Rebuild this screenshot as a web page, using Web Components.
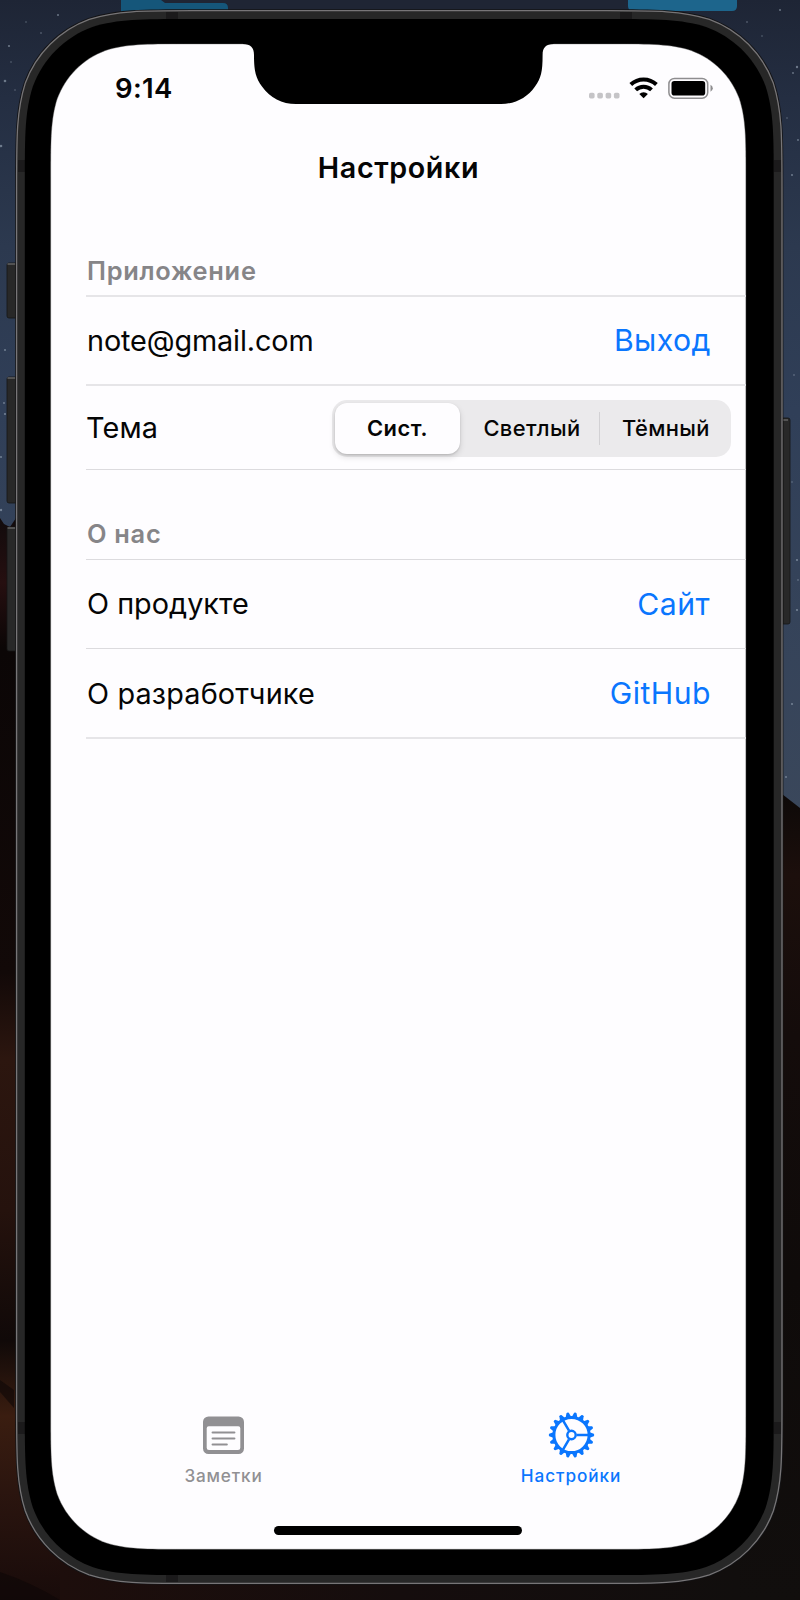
<!DOCTYPE html>
<html lang="ru">
<head>
<meta charset="utf-8">
<title>Настройки</title>
<style>
html,body{margin:0;height:1600px;overflow:hidden;background:#0f0c0d}
body{font-family:Inter,"Liberation Sans",sans-serif;color:#050505}
</style>
</head>
<body>
<desk-wallpaper>
  <phone-frame>
    <status-bar time="9:14"></status-bar>
    <nav-title>Настройки</nav-title>
    <settings-section heading="Приложение" style="--gap:44px;--head:49px;--lh:50.4px;--line:2px;--rule:#e6e5e8">
      <settings-row style="--h:87px;--ls:-.12px">note@gmail.com<link-action slot="action">Выход</link-action></settings-row>
      <settings-row style="--h:83px;--line:1px;--rule:#dcdbde;--tail:15px;--shift:1px;--inset:0px;--ls:.15px">Тема
        <segment-control slot="action">
          <segment-item selected>Сист.</segment-item>
          <segment-item style="--basis:134px;--nudge:2px">Светлый</segment-item>
          <segment-item divided style="--basis:130px;--nudge:6px">Тёмный</segment-item>
        </segment-control>
      </settings-row>
    </settings-section>
    <settings-section heading="О нас" style="--gap:40px;--head:49px;--lh:48.4px;--line:1px;--rule:#dcdbde">
      <settings-row style="--h:88px;--tail:36px">О продукте<link-action slot="action">Сайт</link-action></settings-row>
      <settings-row style="--h:88px;--line:2px;--rule:#e6e5e8;--shift:1px;--ls:.16px">О разработчике<link-action slot="action">GitHub</link-action></settings-row>
    </settings-section>
    <tab-bar>
      <tab-item icon="notes" style="--ls:.8px">Заметки</tab-item>
      <tab-item icon="gear" active style="--ls:.92px">Настройки</tab-item>
    </tab-bar>
    <home-indicator></home-indicator>
  </phone-frame>
</desk-wallpaper>

<script>
const define = (name, render) => customElements.define(name, class extends HTMLElement {
  connectedCallback() {
    if (this.shadowRoot) return;
    this.attachShadow({ mode: 'open' }).innerHTML = render(this);
  }
});

// Continuous-curvature rounded rectangle (iOS corner smoothing).
function squircle(x, y, w, h, r) {
  const a = 1.52866 * r, b = 1.08849 * r, c = .86841 * r, d = .63149 * r, e = .07491 * r, f = .37282 * r, g = .16906 * r;
  const X = x + w, Y = y + h;
  return `M${x} ${y + a}C${x} ${y + b} ${x} ${y + c} ${x + e} ${y + d}C${x + g} ${y + f} ${x + f} ${y + g} ${x + d} ${y + e}C${x + c} ${y} ${x + b} ${y} ${x + a} ${y}` +
    `L${X - a} ${y}C${X - b} ${y} ${X - c} ${y} ${X - d} ${y + e}C${X - f} ${y + g} ${X - g} ${y + f} ${X - e} ${y + d}C${X} ${y + c} ${X} ${y + b} ${X} ${y + a}` +
    `L${X} ${Y - a}C${X} ${Y - b} ${X} ${Y - c} ${X - e} ${Y - d}C${X - g} ${Y - f} ${X - f} ${Y - g} ${X - d} ${Y - e}C${X - c} ${Y} ${X - b} ${Y} ${X - a} ${Y}` +
    `L${x + a} ${Y}C${x + b} ${Y} ${x + c} ${Y} ${x + d} ${Y - e}C${x + f} ${Y - g} ${x + g} ${Y - f} ${x + e} ${Y - d}C${x} ${Y - c} ${x} ${Y - b} ${x} ${Y - a}Z`;
}

define('desk-wallpaper', () => {
  const stars = [[58,15,1],[26,22,.7],[41,33,.8],[9,46,1.1],[5,81,1.3],[15,90,.7],[1,146,1.3],[11,62,.7],[5,350,1],[4,403,.9],[5,414,1.1],[1,457,1],[1,510,1.2],
    [797,67,1.2],[793,73,.9],[780,10,1],[747,22,.8],[762,36,.7],[792,175,1],[787,118,.7],[798,140,.9],[797,560,1.1],[797,610,1.1],[792,704,1],[786,777,.9],[798,580,.8],[794,375,.8],[792,482,.7]]
    .map(([x, y, r]) => `<circle cx="${x}" cy="${y}" r="${r}"/>`).join('');
  return `<style>:host{display:grid;width:800px;height:1600px;overflow:hidden}svg,slot{grid-area:1/1}slot{display:block}svg{display:block}</style>
  <svg width="800" height="1600" viewBox="0 0 800 1600">
    <defs>
      <linearGradient id="sky" x2="0" y2="1"><stop stop-color="#1e2535"/><stop offset=".12" stop-color="#242e42"/><stop offset=".3" stop-color="#2c394f"/><stop offset=".5" stop-color="#303f58"/><stop offset="1" stop-color="#3a475b"/></linearGradient>
      <linearGradient id="left" x2="0" y2="1"><stop stop-color="#110b0c"/><stop offset=".06" stop-color="#260f10"/><stop offset=".12" stop-color="#0b0606"/><stop offset=".42" stop-color="#120908"/><stop offset=".5" stop-color="#2c160f"/><stop offset=".64" stop-color="#25120d"/><stop offset=".76" stop-color="#100908"/><stop offset=".83" stop-color="#3a1d10"/><stop offset=".9" stop-color="#2b150f"/><stop offset="1" stop-color="#180b0a"/></linearGradient>
      <linearGradient id="right" x2="0" y2="1"><stop stop-color="#0d0908"/><stop offset=".1" stop-color="#1c0f0c"/><stop offset=".3" stop-color="#140c0b"/><stop offset=".6" stop-color="#0f0b0a"/><stop offset="1" stop-color="#110e0d"/></linearGradient>
      <linearGradient id="bottom"><stop stop-color="#1d0e0c"/><stop offset=".5" stop-color="#150d0d"/><stop offset="1" stop-color="#110e0d"/></linearGradient>
    </defs>
    <path fill="url(#sky)" d="M0 0h800v820H0z"/>
    <path fill="#1f2534" d="M165 0h460v12H165z"/>
    <g fill="#a9b7c6" opacity=".55">${stars}</g>
    <path fill="#15567a" d="M121 0h40l4 3h58q5 0 5 5v4H121z"/>
    <path fill="#1d658c" d="M628 0h109v6q0 5-5 5h-99q-5 0-5-5z"/>
    <path fill="url(#left)" d="M0 518l4 6 6 3 6-9h300v1082H0z"/>
    <path fill="url(#right)" d="M500 794h282l18 14v792H500z"/>
    <path fill="url(#bottom)" d="M60 1560h680v40H60z"/>
    <path fill="#0d0606" opacity=".6" d="M0 1380l14 10v18L0 1392zM0 1572q30 10 60 28H0z"/>
  </svg><slot></slot>`;
});

define('phone-frame', () => `<style>
  :host{display:grid;width:800px;height:1600px}
  svg,.screen{grid-area:1/1}
  .screen{margin:44px 54px 51px 51px;display:flex;flex-direction:column;z-index:1}
</style>
<svg width="800" height="1600" viewBox="0 0 800 1600">
  <g fill="#282828" stroke="#151515" stroke-width=".8">
    <path d="M16 263H9q-2 0-2 2v51q0 2 2 2h7zM16 377H9q-2 0-2 2v122q0 2 2 2h7zM16 527H9q-2 0-2 2v120q0 2 2 2h7zM783 418h5q2 0 2 2v202q0 2-2 2h-5z"/>
  </g>
  <path stroke="#626262" stroke-width="1.4" d="M7.500 264h8M7.500 378h8M7.500 528h8M783 420h5"/>
  <path d="${squircle(15.2, 9.2, 768.2, 1575.600, 116)}" fill="#141416"/>
  <path d="${squircle(16.600, 10.700, 765.400, 1572.700, 115)}" fill="#272727" stroke="#777577" stroke-width="1.300"/>
  <path fill="#1b1a1b" d="M166 12h12v8h-12zM620 12h12v8h-12zM18 160h7v12h-7zM774 160h7v12h-7zM18 1422h7v12h-7zM774 1422h7v12h-7zM166 1574h12v8h-12z"/>
  <path d="${squircle(24.800, 19, 748.900, 1556, 107)}" fill="#000"/>
  <path d="${squircle(50.700, 43.900, 695.200, 1505.400, 87)}" fill="#fefdff" stroke="#555" stroke-width=".4"/>
  <path fill="#000" d="M243 42v2.100C250.500 44.100 254 47.500 254 55C254 72 256 78 262 86.500C270 98 282 104 296 104H501C515 104 527 98 535 86.500C541 78 542.600 72 542.600 55C542.600 47.500 546 44.100 553.500 44.100V42z"/>
</svg>
<div class="screen"><slot></slot></div>`);

define('status-bar', el => `<style>
  :host{display:flex;align-items:center;justify-content:space-between;height:88.600px;padding:0 32.800px 0 64px;box-sizing:border-box}
  time{font-size:27.500px;font-weight:600;letter-spacing:.34px;line-height:34px}
  svg{display:block}
</style>
<time>${el.getAttribute('time')}</time>
<svg width="124" height="24" viewBox="589.500 76 124 24">
  <g fill="#c5c4c7"><rect x="589.500" y="92.800" width="5.600" height="5.600" rx="1.700"/><rect x="597.800" y="92.800" width="5.600" height="5.600" rx="1.700"/><rect x="606.100" y="92.800" width="5.600" height="5.600" rx="1.700"/><rect x="614.400" y="92.800" width="5.600" height="5.600" rx="1.700"/></g>
  <g fill="none" stroke="#000" stroke-width="4"><path d="M631.300 84.500a18.600 18.600 0 0 1 25.600 0"/><path d="M636.200 89.900a11.400 11.400 0 0 1 15.800 0"/></g>
  <path d="M639.800 94a6.200 6.200 0 0 1 8.600 0l-4.300 4.300z"/>
  <rect x="669.400" y="78.400" width="38.800" height="19.800" rx="5.600" fill="none" stroke="#8e8d8f" stroke-width="1.500"/>
  <rect x="672" y="81" width="33.700" height="14.600" rx="2.800"/>
  <path fill="#8e8d8f" d="M711 84.800q2.300 1 2.300 3.500t-2.300 3.500z"/>
</svg>`);

define('nav-title', () => `<style>
  :host{display:block;height:69.400px;line-height:69.400px;text-align:center;font-size:28.700px;font-weight:600;letter-spacing:.6px}
</style><slot></slot>`);

define('settings-section', el => `<style>
  :host{display:block;padding-top:var(--gap)}
  h2{margin:0 0 0 35px;padding-left:1px;height:var(--head);line-height:var(--lh);font-size:25.400px;font-weight:600;letter-spacing:.72px;color:#868588;border-bottom:var(--line) solid var(--rule)}
</style><h2>${el.getAttribute('heading')}</h2><slot></slot>`);

define('settings-row', () => `<style>
  :host{display:flex;align-items:center;justify-content:space-between;height:var(--h);margin-left:35px;padding-right:var(--tail,35px);border-bottom:var(--line,1px) solid var(--rule);font-size:28.800px;letter-spacing:var(--ls,.02px)}
  span{white-space:nowrap;padding:var(--shift,0) 0 0 var(--inset,1px)}
</style><span><slot></slot></span><slot name="action"></slot>`);

define('link-action', () => `<style>
  :host{display:block;font-size:30.200px;letter-spacing:.45px;color:#0a76fe;line-height:36px}
</style><slot></slot>`);

define('segment-control', () => `<style>
  :host{display:flex;box-sizing:border-box;width:399px;height:57.500px;padding:3px;margin-top:2px;border-radius:15px;background:#ebeaec}
</style><slot></slot>`);

define('segment-item', () => `<style>
  :host{display:flex;align-items:center;justify-content:center;flex:0 0 var(--basis);height:51px;box-sizing:border-box;padding-left:var(--nudge,0);font-size:21.900px;font-weight:500;letter-spacing:.38px;white-space:nowrap;border-radius:12px;position:relative}
  :host([selected]){flex:0 0 125px;margin-right:4px;background:#fefdff;font-weight:600;letter-spacing:.45px;box-shadow:0 3px 6px #0002,0 1px 2px #0002}
  :host([divided])::before{content:"";position:absolute;left:.5px;top:9px;width:1.500px;height:33px;background:#d2d1d4}
</style><slot></slot>`);

const gearTeeth = Array.from({ length: 18 }, (_, i) => `<path d="M17.500-3L22.300-1.200Q23.200 0 22.300 1.200L17.500 3z" transform="rotate(${i * 20})"/>`).join('');
const icons = {
  notes: `<path fill-rule="evenodd" fill="currentColor" d="M8.500 4.500h30a5.500 5.500 0 0 1 5.500 5.500v26.500a5.500 5.500 0 0 1-5.500 5.500h-30a5.500 5.500 0 0 1-5.500-5.500V10a5.500 5.500 0 0 1 5.500-5.500zM8.700 14.200a2 2 0 0 0-2 2v19.600a2.300 2.300 0 0 0 2.300 2.300h29a2.300 2.300 0 0 0 2.300-2.300V16.200a2 2 0 0 0-2-2z"/><path fill="none" stroke="currentColor" stroke-width="2.100" stroke-linecap="round" d="M12.600 20.500h21.800M12.600 26.500h21.800M12.600 32.500h14.200"/>`,
  gear: `<g transform="translate(23.500 23)" fill="currentColor">${gearTeeth}<g fill="none" stroke="currentColor"><circle r="17.600" stroke-width="3"/><circle r="4.200" stroke-width="2.400"/><path stroke-width="2.500" d="M5 0H17M-2.500-4.330L-8.500-14.720M-2.500 4.330L-8.500 14.720"/></g></g>`
};

define('tab-bar', () => `<style>
  :host{display:grid;grid-template-columns:345px 350px;margin-top:auto;height:111px}
</style><slot></slot>`);

define('tab-item', el => `<style>
  :host{display:flex;flex-direction:column;align-items:center;color:#919093;font-size:17.200px;font-weight:500;letter-spacing:var(--ls);box-sizing:border-box}
  :host([active]){color:#0a76fe}
  svg{display:block;margin-top:.5px}
  span{line-height:24px;margin-top:5px}
</style><svg width="47" height="47" viewBox="0 0 47 47">${icons[el.getAttribute('icon')]}</svg><span><slot></slot></span>`);

define('home-indicator', () => `<style>
  :host{display:block;width:248px;height:9px;border-radius:5px;background:#000;margin:4px auto 14px 223.400px}
</style>`);
</script>
</body>
</html>
